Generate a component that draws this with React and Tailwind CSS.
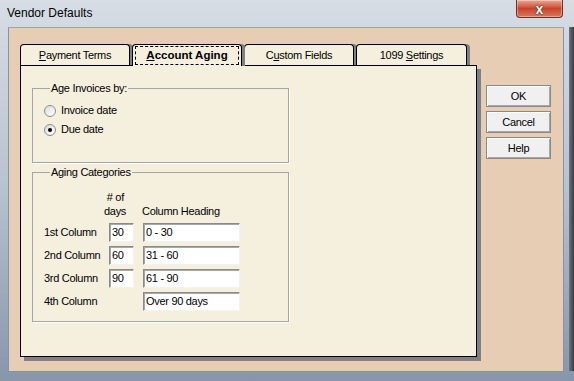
import React from "react";

const font = { fontFamily: '"Liberation Sans", Arial, sans-serif' };

function Tab({ children, selected, w = "w-[110px]" }) {
  if (selected) {
    return (
      <div className={`relative z-10 -mb-px flex h-[22px] ${w} items-start justify-center rounded-t-[4px] border border-b-0 border-black bg-[#f5efde] px-[2px] pt-[1px] shadow-[3px_0_0_#808080]`}>
        <div className="flex h-[19px] w-full items-center justify-center whitespace-nowrap border border-dashed border-black text-[11.5px] font-bold leading-none">
          {children}
        </div>
      </div>
    );
  }
  return (
    <div className={`flex h-[21px] ${w} items-center justify-center whitespace-nowrap rounded-t-[4px] border border-b-0 border-black bg-[#f5efde] text-[11px] leading-none tracking-[-0.3px] shadow-[3px_0_0_#808080]`}>
      {children}
    </div>
  );
}

function Btn({ children }) {
  return (
    <div className="flex h-[22px] w-[65px] items-center justify-center border border-[#8a8a8a] bg-[#f0f0f0] text-[11px] leading-none tracking-[-0.3px] shadow-[inset_1px_1px_0_#ffffff,inset_-1px_-1px_0_#a8a8a8]">
      {children}
    </div>
  );
}

function Radio({ checked, label }) {
  return (
    <div className="flex h-[19px] items-center">
      <div className="flex h-[12px] w-[12px] items-center justify-center rounded-full border border-[#8c8c8c] bg-gradient-to-br from-[#dcdcdc] to-[#ffffff]">
        {checked && <div className="h-[4px] w-[4px] rounded-full bg-black" />}
      </div>
      <span className="ml-[5px] whitespace-nowrap text-[11px] leading-none tracking-[-0.3px]">{label}</span>
    </div>
  );
}

function Field({ value, w }) {
  return (
    <div className={`flex h-[19px] ${w} items-center whitespace-nowrap border border-t-[#8a8a8a] border-l-[#8a8a8a] border-b-[#f2f2f2] border-r-[#f2f2f2] bg-white pl-[2px] text-[11px] leading-none tracking-[-0.3px] shadow-[inset_1px_1px_0_#a8a8a8]`}>
      {value}
    </div>
  );
}

function Row({ label, days, heading }) {
  return (
    <div className="flex h-[19px] items-center">
      <div className="w-[59px] whitespace-nowrap text-[11px] leading-none tracking-[-0.3px]">{label}</div>
      <div className="w-[40px] pl-[6px]">
        {days !== undefined && <Field value={days} w="w-[25px]" />}
      </div>
      <Field value={heading} w="w-[97px]" />
    </div>
  );
}

export default function App() {
  return (
    <div
      style={font}
      className="flex h-[381px] w-[574px] flex-col overflow-hidden bg-gradient-to-b from-[#d7dde5] via-[#b7c2d0] to-[#8796ab] text-black"
    >
      {/* title bar */}
      <div className="flex h-[27px] items-start">
        <div className="ml-[7px] mt-[6px] text-[12px] leading-[14px] text-black">Vendor Defaults</div>
        <div className="ml-auto mr-[11px] flex h-[18px] w-[47px] items-center justify-center rounded-b-[4px] border border-t-0 border-[#7a2a22] bg-gradient-to-b from-[#e8a896] via-[#c9432c] to-[#d9765a] shadow-[inset_0_0_0_1px_rgba(255,255,255,0.35)]">
          <span
            className="text-[14px] font-bold leading-none text-white"
            style={{ textShadow: "0 0 1px #333, 0 0 1px #333, 0 0 1px #333" }}
          >
            x
          </span>
        </div>
      </div>

      {/* middle */}
      <div className="flex flex-1">
        <div className="w-[8px]" />
        <div className="flex w-[556px] border border-b-0 border-[#8393a8] border-t-[#9aa6b6] bg-[#e8cdb5] pl-[11px] pt-[16px]">
          <div className="flex flex-col">
            <div className="flex items-end gap-[2px]">
              <Tab>
                <span><span className="underline">P</span>ayment Terms</span>
              </Tab>
              <Tab selected>
                <span><span className="underline">A</span>ccount Aging</span>
              </Tab>
              <Tab>
                <span>C<span className="underline">u</span>stom Fields</span>
              </Tab>
              <Tab w="w-[111px]">
                <span>1099 <span className="underline">S</span>ettings</span>
              </Tab>
            </div>
            <div className="h-[292px] w-[457px] border border-black bg-[#f5efde] pl-[11px] pt-[16px] shadow-[4px_4px_0_#808080]">
              <fieldset className="w-[257px] border border-[#a5a5a5] pb-[23px] pl-[11px] shadow-[1px_1px_0_#ffffff]">
                <legend className="ml-[6px] whitespace-nowrap px-[1px] text-[11px] leading-[13px] tracking-[-0.3px]">Age Invoices by:</legend>
                <div className="pt-[6px]">
                  <Radio label="Invoice date" />
                  <Radio checked label="Due date" />
                </div>
              </fieldset>
              <fieldset className="mt-[3px] w-[257px] border border-[#a5a5a5] pb-[10px] pl-[11px] shadow-[1px_1px_0_#ffffff]">
                <legend className="ml-[6px] whitespace-nowrap px-[1px] text-[11px] leading-[13px] tracking-[-0.3px]">Aging Categories</legend>
                <div className="flex whitespace-nowrap pt-[11px] text-[11px] leading-[14px] tracking-[-0.3px]">
                  <div className="w-[59px]" />
                  <div className="w-[39px] pl-[1px]">
                    <div>&nbsp;# of</div>
                    <div>days</div>
                  </div>
                  <div className="flex flex-col justify-end">Column Heading</div>
                </div>
                <div className="mt-[5px] flex flex-col gap-[4px]">
                  <Row label="1st Column" days="30" heading="0 - 30" />
                  <Row label="2nd Column" days="60" heading="31 - 60" />
                  <Row label="3rd Column" days="90" heading="61 - 90" />
                  <Row label="4th Column" heading="Over 90 days" />
                </div>
              </fieldset>
            </div>
          </div>
          <div className="ml-[9px] mt-[41px] flex flex-col gap-[4px]">
            <Btn>OK</Btn>
            <Btn>Cancel</Btn>
            <Btn>Help</Btn>
          </div>
        </div>
        <div className="flex w-[10px]">
          <div className="w-[5px]" />
          <div className="w-[5px] bg-gradient-to-r from-[#6b7686] to-[#3c3c3c]" />
        </div>
      </div>

      {/* bottom frame */}
      <div className="flex h-[10px]">
        <div className="w-[8px]" />
        <div className="h-[1px] w-[556px] bg-[#8393a8]" />
      </div>
    </div>
  );
}
